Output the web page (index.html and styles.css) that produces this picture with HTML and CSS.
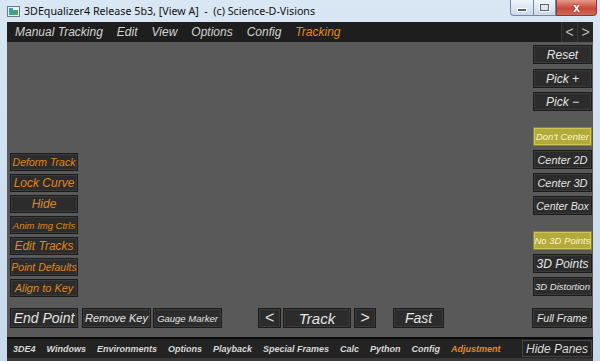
FILE: index.html
```html
<!DOCTYPE html>
<html lang="en">
<head>
<meta charset="UTF-8">
<title>3DEqualizer4</title>
<link rel="stylesheet" href="styles.css">
</head>
<body>
<div class="window">
    <div class="titlebar">
        <span class="app-icon">
            <svg width="13" height="11" viewBox="0 0 13 11">
                <rect x="0.5" y="0.5" width="12" height="10" fill="#e8eef4" stroke="#6d7a88"/>
                <rect x="2" y="2" width="4" height="7" fill="#3aa0b8"/>
                <rect x="6" y="4" width="5" height="5" fill="#48a860"/>
            </svg>
        </span>
        <span class="title">3DEqualizer4 Release 5b3, [View A]&nbsp; - &nbsp;(c) Science-D-Visions</span>
        <div class="caption">
            <span class="cap min"><i></i></span>
            <span class="cap max"><i></i></span>
            <span class="cap close">x</span>
        </div>
    </div>
    <div class="frame">
        <div class="app">
            <div class="menubar">
                <span class="menu">Manual Tracking</span>
                <span class="menu">Edit</span>
                <span class="menu">View</span>
                <span class="menu">Options</span>
                <span class="menu">Config</span>
                <span class="menu active">Tracking</span>
                <div class="menu-arrows">
                    <span class="arrow">&lt;</span>
                    <span class="arrow">&gt;</span>
                </div>
            </div>

            <div class="workspace">
                <div class="left-col">
                    <div class="btn orange s10">Deform Track</div>
                    <div class="btn orange s12">Lock Curve</div>
                    <div class="btn orange s12">Hide</div>
                    <div class="btn orange s9">Anim Img Ctrls</div>
                    <div class="btn orange s12">Edit Tracks</div>
                    <div class="btn orange s10">Point Defaults</div>
                    <div class="btn orange s11">Align to Key</div>
                </div>
                <div class="right-col">
                    <div class="btn s12">Reset</div>
                    <div class="group first">
                        <div class="btn s12">Pick +</div>
                        <div class="btn s12">Pick &minus;</div>
                    </div>
                    <div class="group">
                        <div class="btn yellow s9">Don't Center</div>
                        <div class="btn s11">Center 2D</div>
                        <div class="btn s11">Center 3D</div>
                        <div class="btn s10">Center Box</div>
                    </div>
                    <div class="group">
                        <div class="btn yellow s9">No 3D Points</div>
                        <div class="btn s12">3D Points</div>
                        <div class="btn s9">3D Distortion</div>
                    </div>
                </div>
            </div>

            <div class="bottom-row">
                <div class="btn s14 end-point">End Point</div>
                <div class="btn s11 remove-key">Remove Key</div>
                <div class="btn s9 gauge">Gauge Marker</div>
                <div class="btn s16 prev">&lt;</div>
                <div class="btn s15 track">Track</div>
                <div class="btn s16 next">&gt;</div>
                <div class="btn s14 fast">Fast</div>
                <div class="btn s10 full-frame">Full Frame</div>
            </div>

            <div class="rule"></div>

            <div class="bottom-menu">
                <span class="bmenu">3DE4</span>
                <span class="bmenu">Windows</span>
                <span class="bmenu">Environments</span>
                <span class="bmenu">Options</span>
                <span class="bmenu">Playback</span>
                <span class="bmenu">Special Frames</span>
                <span class="bmenu">Calc</span>
                <span class="bmenu">Python</span>
                <span class="bmenu">Config</span>
                <span class="bmenu active">Adjustment</span>
                <span class="hide-panes">Hide Panes</span>
            </div>
            <div class="tail"></div>
        </div>
    </div>
</div>
</body>
</html>
```

FILE: styles.css
```css
body {
    margin: 0;
    padding: 0;
    width: 600px;
    height: 361px;
    overflow: hidden;
    font-family: "Liberation Sans", Arial, sans-serif;
}
.window {
    width: 600px;
    height: 361px;
    display: flex;
    flex-direction: column;
    background: linear-gradient(to bottom, #d9e6f3, #c7d9ec);
}
.titlebar {
    height: 22px;
    display: flex;
    align-items: center;
    position: relative;
}
.app-icon {
    width: 13px;
    height: 11px;
    margin-left: 7px;
    margin-top: 1px;
    display: flex;
}
.title {
    margin-left: 4px;
    font-family: "Noto Sans", "Liberation Sans", sans-serif;
    font-size: 10.7px;
    color: #101010;
    white-space: nowrap;
}
.caption {
    position: absolute;
    top: 0;
    left: 510px;
    display: flex;
}
.cap {
    height: 16px;
    border: 1px solid #7488a4;
    border-top: none;
    box-sizing: border-box;
    display: flex;
    align-items: center;
    justify-content: center;
}
.cap.min, .cap.max {
    width: 23px;
    background: linear-gradient(to bottom, #eef4fa, #cdd9e8);
}
.cap.min {
    border-radius: 0 0 0 4px;
    border-right: none;
}
.cap.min i {
    width: 8px;
    height: 2px;
    margin-top: 4px;
    background: #56606c;
    border: 1px solid #fff;
}
.cap.max i {
    width: 7px;
    height: 5px;
    border: 1px solid #56606c;
    box-shadow: 0 0 0 1px #fff;
}
.cap.close {
    width: 41px;
    border-color: #8a3a3a;
    border-radius: 0 0 4px 0;
    background: linear-gradient(to bottom, #e89a88, #c64a3c 55%, #d06a56);
    color: #fff;
    font-weight: bold;
    font-size: 12px;
    line-height: 14px;
    text-shadow: 0 0 2px #6a1a10;
}
.frame {
    flex: 1;
    display: flex;
    padding: 0 7px;
}
.app {
    flex: 1;
    display: flex;
    flex-direction: column;
    background-color: #595959;
}
.menubar {
    height: 20px;
    background-color: #1e1e1e;
    display: flex;
    align-items: center;
    gap: 14px;
    padding-left: 8px;
    box-sizing: border-box;
}
.menu {
    font-style: italic;
    font-size: 12px;
    color: #d4d4d4;
}
.active {
    color: #e8891c;
}
.menu-arrows {
    margin-left: auto;
    display: flex;
    height: 20px;
}
.arrow {
    width: 15px;
    border-left: 1px solid #3a3a3a;
    background-color: #262626;
    color: #bdbdbd;
    font-size: 14px;
    display: flex;
    align-items: center;
    justify-content: center;
}
.workspace {
    height: 264px;
    display: flex;
    justify-content: space-between;
}
.left-col {
    display: flex;
    flex-direction: column;
    gap: 3px;
    padding-top: 111px;
    margin-left: 3px;
}
.left-col .btn {
    width: 68px;
    height: 18px;
}
.right-col {
    display: flex;
    flex-direction: column;
    padding-top: 3px;
    margin-right: 1px;
}
.right-col .btn {
    width: 59px;
    height: 19px;
}
.group {
    display: flex;
    flex-direction: column;
    gap: 4px;
    margin-top: 16px;
}
.group.first {
    margin-top: 5px;
}
.btn {
    box-sizing: border-box;
    background-color: #2c2c2c;
    border: 1px solid #1b1b1b;
    box-shadow: inset 0 0 0 1px #3b3b3b;
    color: #e4e4e4;
    font-style: italic;
    display: flex;
    align-items: center;
    justify-content: center;
    white-space: nowrap;
    overflow: hidden;
}
.btn.orange {
    color: #e2861c;
}
.btn.yellow {
    background-color: #b3aa3a;
    border-color: #8c8428;
    box-shadow: inset 0 0 0 1px #cfc65c;
    color: #fbf6d0;
}
.s9 { font-size: 9.5px; }
.s10 { font-size: 10.5px; }
.s11 { font-size: 11px; }
.s12 { font-size: 12px; }
.s14 { font-size: 14px; }
.s15 { font-size: 15px; }
.s16 { font-size: 16px; }
.bottom-row {
    height: 31px;
    display: flex;
    align-items: flex-start;
    padding-top: 2px;
    box-sizing: border-box;
}
.bottom-row .btn {
    height: 20px;
}
.end-point { width: 68px; margin-left: 3px; }
.remove-key { width: 69px; margin-left: 4px; }
.gauge { width: 69px; margin-left: 2px; }
.prev { width: 23px; margin-left: 36px; }
.track { width: 68px; margin-left: 2px; }
.next { width: 22px; margin-left: 3px; }
.fast { width: 51px; margin-left: 17px; }
.full-frame { width: 60px; margin-left: auto; margin-right: 1px; }
.rule {
    height: 2px;
    background-color: #0c0c0c;
}
.bottom-menu {
    height: 19px;
    background-color: #232323;
    display: flex;
    align-items: center;
    gap: 11px;
    padding-left: 6px;
    box-sizing: border-box;
    white-space: nowrap;
}
.bmenu {
    font-style: italic;
    font-weight: bold;
    font-size: 9px;
    color: #d8d8d8;
}
.bmenu.active {
    color: #e8891c;
}
.hide-panes {
    margin-left: auto;
    margin-right: 1px;
    width: 70px;
    height: 17px;
    box-sizing: border-box;
    border: 1px solid #444;
    font-style: italic;
    font-size: 12px;
    color: #d8d8d8;
    display: flex;
    align-items: center;
    justify-content: center;
}
.tail {
    height: 3px;
    background-color: #3c3838;
}
```
